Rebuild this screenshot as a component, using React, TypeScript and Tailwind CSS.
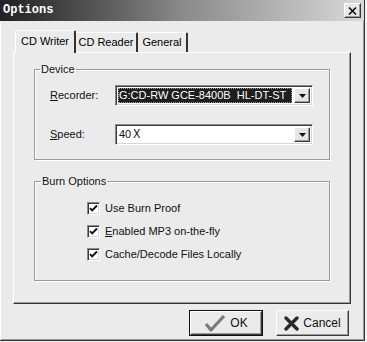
import React from 'react'

const raised =
  'border border-t-white border-l-white border-r-[#3a3a3a] border-b-[#3a3a3a] shadow-[inset_-1px_-1px_0_#9a9a9a]'
const sunken =
  'border border-t-[#8a8a8a] border-l-[#8a8a8a] border-r-white border-b-white shadow-[inset_1px_1px_0_#3a3a3a,inset_-1px_-1px_0_#d6d6d6]'

function ArrowButton() {
  return (
    <div className={`w-[16px] h-full bg-[#e6e6e6] flex items-center justify-center ${raised}`}>
      <svg width="7" height="4" viewBox="0 0 7 4">
        <path d="M0 0h7L3.5 4z" fill="#111" />
      </svg>
    </div>
  )
}

function Combo({ value, selected }: { value: string; selected?: boolean }) {
  return (
    <div className={`w-[198px] h-[21px] bg-white flex items-stretch p-[2px] ${sunken}`}>
      <div
        className={
          selected
            ? 'flex-1 flex items-center pl-[1px] whitespace-pre bg-[#1e1e1e] text-white outline outline-1 outline-dotted outline-[#999] -outline-offset-1 mr-[2px]'
            : 'flex-1 flex items-center pl-[1px] whitespace-pre text-[#111] mr-[2px]'
        }
      >
        {value}
      </div>
      <ArrowButton />
    </div>
  )
}

function Check({ label, u }: { label: string; u?: string }) {
  return (
    <div className="flex items-center h-[13px]">
      <div className={`w-[13px] h-[13px] bg-white flex items-center justify-center ${sunken}`}>
        <svg width="9" height="9" viewBox="0 0 9 9">
          <path d="M1 4.2l2.2 2.3L8 1.5" fill="none" stroke="#111" strokeWidth="1.9" />
        </svg>
      </div>
      <span className="ml-[5px] text-[#111]">
        {u ? <span className="underline">{u}</span> : null}
        {u ? label.slice(u.length) : label}
      </span>
    </div>
  )
}

export default function App() {
  return (
    <div
      className="w-[367px] h-[342px] bg-[#f4f4f4] overflow-hidden text-[11px] leading-[13px]"
      style={{ fontFamily: '"Liberation Sans", Arial, "Noto Sans CJK SC", sans-serif' }}
    >
      <div className="w-[365px] h-[341px] bg-[#ebebeb] flex flex-col border-r border-b border-[#333] shadow-[inset_1px_1px_0_#fff,inset_-1px_-1px_0_#9a9a9a]">
        {/* title bar */}
        <div className="h-[21px] flex items-center bg-gradient-to-r from-[#222] via-[#8a8a8a] to-[#dadada] pl-[3px] pr-[3px]">
          <span
            className="text-white font-bold text-[12px]"
            style={{ fontFamily: '"Liberation Mono", "Courier New", monospace' }}
          >
            Options
          </span>
          <div className={`ml-auto w-[17px] h-[15px] bg-[#e8e8e8] flex items-center justify-center ${raised}`}>
            <svg width="9" height="8" viewBox="0 0 9 8">
              <path d="M1 0.5l7 7M8 0.5l-7 7" stroke="#111" strokeWidth="1.6" />
            </svg>
          </div>
        </div>

        <div className="flex-1 flex flex-col pl-[13px] pr-[13px] pt-[9px]">
          {/* tabs */}
          <div className="flex items-end h-[22px] pl-[2px]">
            <div className="relative z-10 w-[61px] h-[23px] -mb-[1px] bg-[#ebebeb] border-l border-t border-white border-r-2 border-r-[#333] rounded-t-[2px] flex items-center justify-center pb-[2px]">
              CD Writer
            </div>
            <div className="w-[62px] h-[20px] border-t border-white border-r-2 border-r-[#333] rounded-tr-[2px] flex items-center justify-center">
              CD Reader
            </div>
            <div className="w-[50px] h-[20px] border-t border-white border-r-2 border-r-[#333] rounded-tr-[2px] flex items-center justify-center">
              General
            </div>
          </div>

          {/* panel */}
          <div className="h-[252px] border border-t-white border-l-white border-r-[#333] border-b-[#333] shadow-[inset_-1px_-1px_0_#9a9a9a] px-[20px] pt-[10px]">
            <fieldset className="h-[97px] border border-[#9a9a9a] shadow-[inset_1px_1px_0_#fff,1px_1px_0_#fff]">
              <legend className="ml-[5px] px-[1px] text-[#111]">Device</legend>
              <div className="pl-[15px]">
                <div className="flex items-center mt-[9px]">
                  <span className="w-[65px] text-[#111]">
                    <span className="underline">R</span>ecorder:
                  </span>
                  <Combo value="G:CD-RW GCE-8400B  HL-DT-ST" selected />
                </div>
                <div className="flex items-center mt-[18px]">
                  <span className="w-[65px] text-[#111]">
                    <span className="underline">S</span>peed:
                  </span>
                  <Combo value="40Ｘ" />
                </div>
              </div>
            </fieldset>

            <fieldset className="h-[106px] mt-[15px] border border-[#9a9a9a] shadow-[inset_1px_1px_0_#fff,1px_1px_0_#fff]">
              <legend className="ml-[6px] px-[1px] text-[#111]">Burn Options</legend>
              <div className="pl-[52px] mt-[14px] flex flex-col gap-[10px]">
                <Check label="Use Burn Proof" />
                <Check label="Enabled MP3 on-the-fly" u="E" />
                <Check label="Cache/Decode Files Locally" />
              </div>
            </fieldset>
          </div>

          {/* buttons */}
          <div className="flex justify-end gap-[13px] mt-[6px] pr-[2px]">
            <div className="w-[74px] h-[26px] border border-[#111] flex">
              <div className={`flex-1 bg-[#ebebeb] flex items-center justify-center gap-[4px] ${raised}`}>
                <svg width="22" height="18" viewBox="0 0 22 18">
                  <path d="M2 10l5 6L20 2" fill="none" stroke="#7a7a7a" strokeWidth="3.2" strokeLinejoin="round" />
                </svg>
                <span className="text-[#111] text-[12px]">OK</span>
              </div>
            </div>
            <div className={`w-[73px] h-[26px] bg-[#ebebeb] flex items-center justify-center gap-[4px] ${raised}`}>
              <svg width="15" height="15" viewBox="0 0 15 15">
                <path d="M2 2l11 11M13 2L2 13" stroke="#2a2a2a" strokeWidth="3.4" strokeLinecap="round" />
              </svg>
              <span className="text-[#111] text-[12px]">Cancel</span>
            </div>
          </div>
        </div>
      </div>
    </div>
  )
}
